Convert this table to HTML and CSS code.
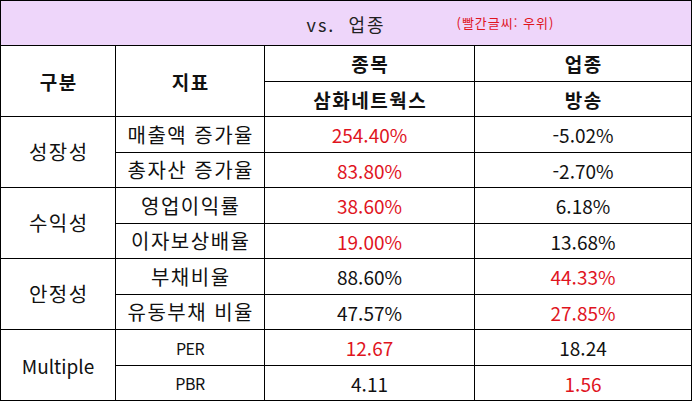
FILE: index.html
```html
<!DOCTYPE html>
<html lang="ko">
<head>
<meta charset="utf-8">
<link rel="stylesheet" href="styles.css">
</head>
<body>
<table class="cmp">
  <colgroup>
    <col class="c1"><col class="c2"><col class="c3"><col class="c4">
  </colgroup>
  <tr class="title-row">
    <td colspan="4" class="title">
      <div class="title-grid">
        <span></span>
        <span class="title-text">vs. 업종</span>
        <span class="note">(빨간글씨: 우위)</span>
      </div>
    </td>
  </tr>
  <tr class="r36">
    <th rowspan="2">구분</th>
    <th rowspan="2">지표</th>
    <th>종목</th>
    <th>업종</th>
  </tr>
  <tr class="r35">
    <th>삼화네트웍스</th>
    <th>방송</th>
  </tr>
  <tr class="r36">
    <td rowspan="2" class="ko">성장성</td>
    <td class="ko">매출액 증가율</td>
    <td class="red">254.40%</td>
    <td>-5.02%</td>
  </tr>
  <tr class="r35">
    <td class="ko">총자산 증가율</td>
    <td class="red">83.80%</td>
    <td>-2.70%</td>
  </tr>
  <tr class="r36">
    <td rowspan="2" class="ko">수익성</td>
    <td class="ko">영업이익률</td>
    <td class="red">38.60%</td>
    <td>6.18%</td>
  </tr>
  <tr class="r35">
    <td class="ko">이자보상배율</td>
    <td class="red">19.00%</td>
    <td>13.68%</td>
  </tr>
  <tr class="r36">
    <td rowspan="2" class="ko">안정성</td>
    <td class="ko">부채비율</td>
    <td>88.60%</td>
    <td class="red">44.33%</td>
  </tr>
  <tr class="r35">
    <td class="ko">유동부채 비율</td>
    <td>47.57%</td>
    <td class="red">27.85%</td>
  </tr>
  <tr class="r36">
    <td rowspan="2">Multiple</td>
    <td class="small">PER</td>
    <td class="red">12.67</td>
    <td>18.24</td>
  </tr>
  <tr class="r35">
    <td class="small">PBR</td>
    <td>4.11</td>
    <td class="red">1.56</td>
  </tr>
</table>
</body>
</html>
```

FILE: styles.css
```css
html, body {
  margin: 0;
  padding: 0;
  background: #fff;
}
body {
  font-family: "Noto Sans CJK KR", "Noto Sans", sans-serif;
  color: #111;
}
.cmp {
  border-collapse: collapse;
  table-layout: fixed;
  width: 691px;
}
.c1 { width: 115px; }
.c2 { width: 149px; }
.c3 { width: 210px; }
.c4 { width: 217px; }
.cmp td, .cmp th {
  border: 1px solid #000;
  text-align: center;
  vertical-align: middle;
  padding: 0;
  font-size: 19px;
  font-weight: 400;
  line-height: 1;
  white-space: nowrap;
}
.cmp th {
  font-weight: 700;
  font-size: 19px;
  letter-spacing: 1.5px;
  text-indent: 1.5px;
}
.cmp td.ko {
  font-size: 20px;
  letter-spacing: 1.5px;
  text-indent: 1.5px;
}
.title-row { height: 45px; }
.r36 { height: 36px; }
.r35 { height: 35px; }
.cmp td.title {
  background: #eed6fa;
}
.title-grid {
  display: grid;
  grid-template-columns: 1fr auto 1fr;
  align-items: center;
}
.title-text {
  font-size: 18px;
  letter-spacing: 2px;
  word-spacing: 6px;
  color: #222;
  padding-top: 2px;
}
.note {
  justify-self: start;
  padding-left: 71px;
  font-size: 13px;
  letter-spacing: 1px;
  color: #e0141e;
  padding-bottom: 2px;
}
.red { color: #e0141e; }
.cmp td.small {
  font-size: 16px;
  letter-spacing: -0.5px;
}
```
